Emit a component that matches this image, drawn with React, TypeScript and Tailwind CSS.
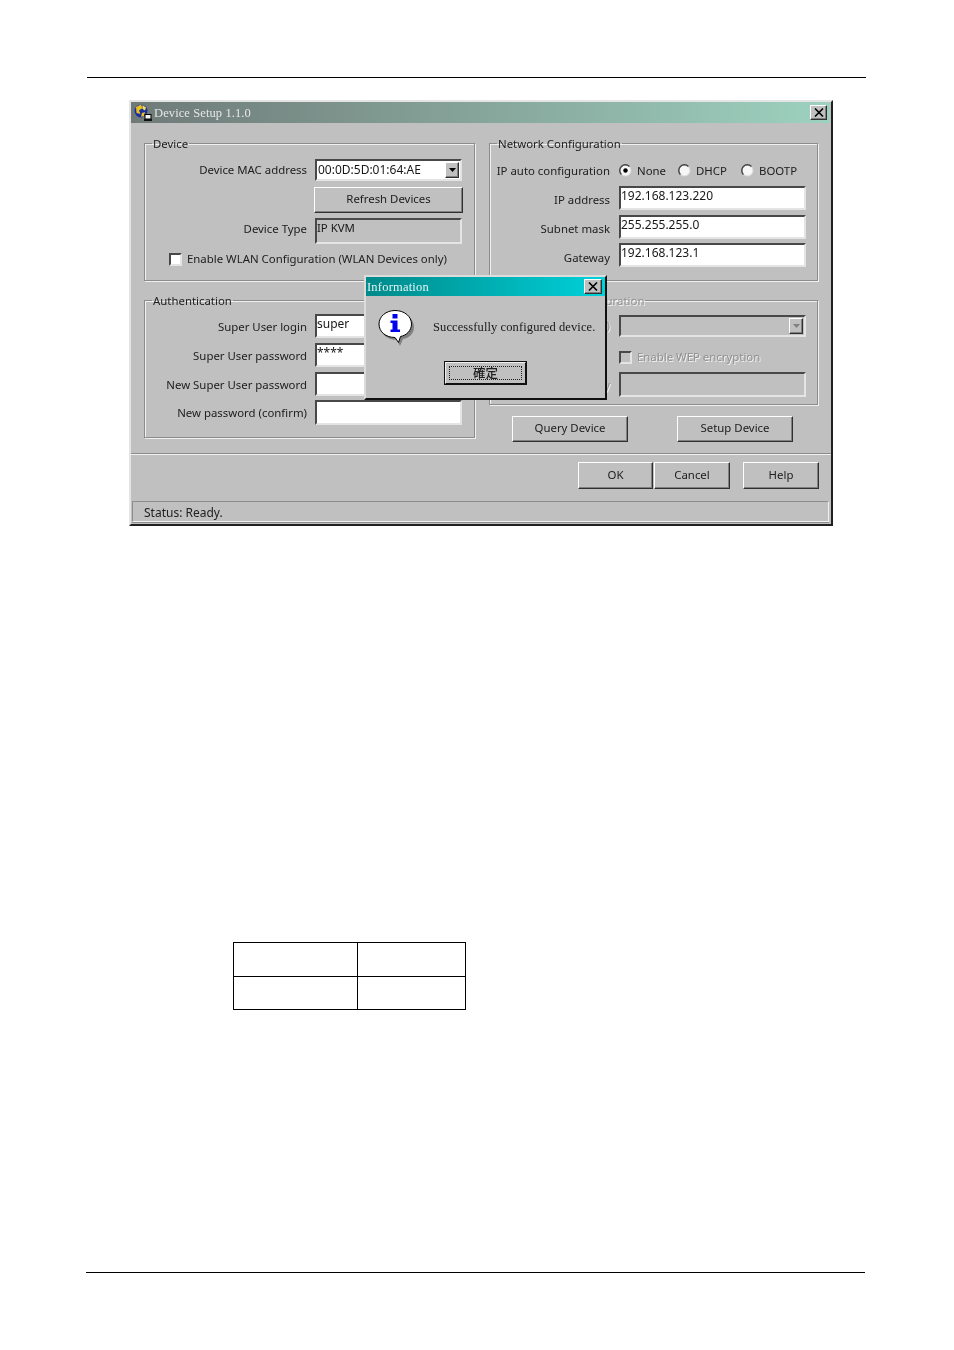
import React from "react";

const SANS = "font-['Noto_Sans','Liberation_Sans',sans-serif] text-[11.4px] leading-[14px] text-[#202020]";
const RAISED =
  "border border-t-white border-l-white border-r-[#303030] border-b-[#303030] shadow-[inset_-1px_-1px_0_#808080] bg-[#c0c0c0]";
const SUNKEN =
  "border-2 border-t-[#484848] border-l-[#484848] border-r-[#e4e4e4] border-b-[#e4e4e4]";
const GROUP =
  "border border-[#8c8c8c] shadow-[inset_1px_1px_0_#f0f0f0,1px_1px_0_#f0f0f0] min-w-0";

function Group({ title, disabled, className, children }: { title: string; disabled?: boolean; className: string; children?: React.ReactNode }) {
  return (
    <fieldset className={`${GROUP} ${className}`}>
      <legend className={`ml-[7px] px-px pt-px ${disabled ? "text-[#909090] [text-shadow:1px_1px_0_#f4f4f4]" : ""}`}>{title}</legend>
      {children}
    </fieldset>
  );
}

function Field({ value, className, wide }: { value?: string; className?: string; wide?: boolean }) {
  return (
    <div className={`${SUNKEN} ${wide ? "w-[187px]" : "w-[147px]"} bg-white pt-px text-[12px] leading-[14px] text-[#181818] ${className ?? ""}`}>
      {value}
    </div>
  );
}

function Row({ label, labelWidth, gap, children, className, disabled, labelClass }: { label: string; labelWidth: string; gap: string; children: React.ReactNode; className?: string; disabled?: boolean; labelClass?: string }) {
  return (
    <div className={`flex items-center ${gap} ${className ?? ""}`}>
      <span className={`${labelWidth} whitespace-nowrap text-right ${labelClass ?? ""} ${disabled ? "text-[#909090] [text-shadow:1px_1px_0_#f4f4f4]" : ""}`}>{label}</span>
      {children}
    </div>
  );
}

function Arrow({ color = "#000" }: { color?: string }) {
  return (
    <svg width="7" height="4" viewBox="0 0 7 4">
      <path d="M0 0H7L3.5 4Z" fill={color} />
    </svg>
  );
}

function Close({ className }: { className: string }) {
  return (
    <div className={`${RAISED} flex items-center justify-center ${className}`}>
      <svg width="10" height="9" viewBox="0 0 10 9">
        <path d="M1 0.5L9 8.5M9 0.5L1 8.5" stroke="#000" strokeWidth="1.6" />
      </svg>
    </div>
  );
}

function Radio({ checked, label, className }: { checked?: boolean; label: string; className: string }) {
  return (
    <div className={`flex items-center ${className}`}>
      <svg width="13" height="13" viewBox="0 0 13 13" className="shrink-0">
        <circle cx="6.5" cy="6.5" r="5.5" fill="#f6f6f6" stroke="#d8d8d8" />
        <path d="M2.4 10.4A5.5 5.5 0 0 1 10.4 2.4" fill="none" stroke="#404040" strokeWidth="1.4" />
        {checked && <circle cx="6.5" cy="6.5" r="2.2" fill="#000" />}
      </svg>
      <span className="ml-[5px]">{label}</span>
    </div>
  );
}

function Box({ disabled, className }: { disabled?: boolean; className?: string }) {
  return <div className={`${SUNKEN} w-[13px] h-[13px] shrink-0 ${disabled ? "bg-[#c0c0c0]" : "bg-white"} ${className ?? ""}`} />;
}

function Button({ label, className }: { label: string; className: string }) {
  return <div className={`${RAISED} flex items-center justify-center pb-[2px] ${className}`}>{label}</div>;
}

function AppIcon() {
  return (
    <svg width="18" height="17" viewBox="0 0 18 17" className="shrink-0">
      <circle cx="7" cy="7" r="6.5" fill="#1c2f9c" />
      <path d="M2 3L7 0.5L8.500 4L5 6.500L6.500 10L2.500 9Z" fill="#e8c020" />
      <path d="M8.500 1L12 3.500L11 6.500L8.500 5Z" fill="#f0e060" />
      <path d="M8 9L11 8L10 12.500L7 12.500Z" fill="#e8c020" />
      <rect x="11" y="10.500" width="6" height="4.500" fill="#f4f4f4" stroke="#000" />
      <rect x="10" y="15" width="8" height="2" fill="#101010" />
    </svg>
  );
}

function InfoIcon() {
  return (
    <svg width="38" height="38" viewBox="0 0 38 38" className="shrink-0">
      <path d="M19 4C29 4 36 10 36 18C36 25 31 29 25 30L22 37L19 31C9 31 3 25 3 18C3 10 9 4 19 4Z" fill="#808080" />
      <path d="M17 1.500C26.500 1.500 33.500 7.500 33.500 15C33.500 22 28 26.500 22.500 27.500L20.500 33.500L17 28.500C8 28.500 1 23 1 15C1 7.500 8 1.500 17 1.500Z" fill="#fff" stroke="#000" />
      <rect x="14.500" y="5" width="5" height="4.500" fill="#0000f0" />
      <path d="M12.500 11.500H19.500V20.500H22V23H12.500V20.500H14.500V14H12.500Z" fill="#0000f0" />
    </svg>
  );
}

export default function App() {
  return (
    <div className="w-[954px] h-[1350px] bg-white overflow-hidden pt-[77px]">
      <div className="ml-[87px] w-[779px] h-px bg-black" />

      <div className={`relative mt-[22px] ml-[129px] w-[704px] h-[426px] bg-[#c0c0c0] border-2 border-t-[#e4e4e4] border-l-[#e4e4e4] border-r-[#202020] border-b-[#202020] blur-[0.35px] ${SANS}`}>
        <div className="h-[21px] mr-px flex items-center pl-[3px] pr-[3px] bg-gradient-to-r from-[#6f7a78] to-[#9dd2bf]">
          <AppIcon />
          <span className="ml-[2px] font-['Liberation_Serif',serif] text-[12.5px] tracking-[0.1px] text-[#e6e6e6]">Device Setup 1.1.0</span>
          <Close className="ml-auto w-[17px] h-[15px]" />
        </div>

        <div className="h-[330px] flex pl-[13px] pt-[13px] gap-[14px]">
          <div className="w-[331px] flex flex-col gap-[12px]">
            <Group title="Device" className="h-[145px]">
              <Row label="Device MAC address" labelWidth="w-[162px]" gap="gap-[8px]" className="mt-[8px]">
                <div className={`${SUNKEN} w-[147px] h-[22px] bg-white flex items-center justify-between pl-px pr-px text-[12px] text-[#181818]`}>
                  <span className="whitespace-nowrap">00:0D:5D:01:64:AE</span>
                  <div className={`${RAISED} w-[14px] h-[16px] flex items-center justify-center`}>
                    <Arrow />
                  </div>
                </div>
              </Row>
              <Button label="Refresh Devices" className="ml-[169px] mt-[6px] w-[149px] h-[26px]" />
              <Row label="Device Type" labelWidth="w-[162px]" gap="gap-[8px]" className="mt-[5px]" labelClass="pb-[4px]">
                <Field value="IP KVM" className="h-[26px] !bg-[#c0c0c0] !text-[11.4px] pt-[2px]" />
              </Row>
              <div className="mt-[8px] ml-[24px] flex items-center">
                <Box />
                <span className="ml-[5px] whitespace-nowrap">Enable WLAN Configuration (WLAN Devices only)</span>
              </div>
            </Group>

            <Group title="Authentication" className="h-[145px]">
              <Row label="Super User login" labelWidth="w-[162px]" gap="gap-[8px]" className="mt-[6px]" labelClass="pt-[1px]">
                <Field value="super" className="h-[24px]" />
              </Row>
              <Row label="Super User password" labelWidth="w-[162px]" gap="gap-[8px]" className="mt-[5px]" labelClass="pt-[1px]">
                <Field value="****" className="h-[24px]" />
              </Row>
              <Row label="New Super User password" labelWidth="w-[162px]" gap="gap-[8px]" className="mt-[5px]" labelClass="pt-[1px]">
                <Field className="h-[24px]" />
              </Row>
              <Row label="New password (confirm)" labelWidth="w-[162px]" gap="gap-[8px]" className="mt-[4px]">
                <Field className="h-[25px]" />
              </Row>
            </Group>
          </div>

          <div className="w-[329px] flex flex-col">
            <Group title="Network Configuration" className="h-[145px]">
              <Row label="IP auto configuration" labelWidth="w-[120px]" gap="gap-[9px]" className="mt-[12px] h-[15px]">
                <div className="flex items-center">
                  <Radio checked label="None" className="w-[59px]" />
                  <Radio label="DHCP" className="w-[63px]" />
                  <Radio label="BOOTP" className="w-[60px]" />
                </div>
              </Row>
              <Row label="IP address" labelWidth="w-[120px]" gap="gap-[9px]" className="mt-[8px]" labelClass="pt-[3px]">
                <Field wide value="192.168.123.220" className="h-[24px]" />
              </Row>
              <Row label="Subnet mask" labelWidth="w-[120px]" gap="gap-[9px]" className="mt-[5px]" labelClass="pt-[3px]">
                <Field wide value="255.255.255.0" className="h-[24px]" />
              </Row>
              <Row label="Gateway" labelWidth="w-[120px]" gap="gap-[9px]" className="mt-[4px]" labelClass="pt-[5px]">
                <Field wide value="192.168.123.1" className="h-[24px]" />
              </Row>
            </Group>

            <Group title="Wireless LAN Configuration" disabled className="h-[112px] mt-[12px]">
              <Row label="ESSID (SSID)" labelWidth="w-[120px]" gap="gap-[9px]" className="mt-[7px]" disabled>
                <div className={`${SUNKEN} w-[187px] h-[22px] flex items-center justify-end pr-px`}>
                  <div className={`${RAISED} w-[14px] h-[16px] flex items-center justify-center`}>
                    <Arrow color="#808080" />
                  </div>
                </div>
              </Row>
              <div className="mt-[13px] ml-[129px] flex items-center">
                <Box disabled />
                <span className="ml-[5px] whitespace-nowrap text-[#909090] [text-shadow:1px_1px_0_#f4f4f4]">Enable WEP encryption</span>
              </div>
              <Row label="WEP key" labelWidth="w-[120px]" gap="gap-[9px]" className="mt-[8px]" disabled>
                <div className={`${SUNKEN} w-[187px] h-[25px]`} />
              </Row>
            </Group>

            <div className="mt-[11px] pl-[23px] flex gap-[49px]">
              <Button label="Query Device" className="w-[116px] h-[26px]" />
              <Button label="Setup Device" className="w-[116px] h-[26px]" />
            </div>
          </div>
        </div>

        <div className="h-[2px] border-t border-t-[#8c8c8c] border-b border-b-[#f0f0f0]" />

        <div className="pt-[7px] pr-[12px] flex justify-end">
          <Button label="OK" className="w-[75px] h-[27px]" />
          <Button label="Cancel" className="ml-px w-[76px] h-[27px]" />
          <Button label="Help" className="ml-[13px] w-[76px] h-[27px]" />
        </div>

        <div className="mt-[12px] ml-px mr-[2px] h-[21px] flex items-center pl-[11px] pt-[2px] text-[12px] border border-t-[#8c8c8c] border-l-[#8c8c8c] border-r-[#f0f0f0] border-b-[#f0f0f0] shadow-[0_1px_0_#8c8c8c]">
          Status: Ready.
        </div>

        <div className="absolute left-[233px] top-[173px] w-[243px] h-[125px] bg-[#c0c0c0] border-2 border-t-[#dcdcdc] border-l-[#dcdcdc] border-r-[#101010] border-b-[#101010]">
          <div className="h-[19px] flex items-center pl-[1px] pr-[3px] bg-gradient-to-r from-[#008a8a] to-[#00d2da]">
            <span className="font-['Liberation_Serif',serif] text-[12.5px] tracking-[0.2px] text-[#e8f4f4]">Information</span>
            <Close className="ml-auto w-[18px] h-[15px]" />
          </div>
          <div className="flex pt-[13px] pl-[12px]">
            <InfoIcon />
            <span className="mt-[11px] ml-[17px] whitespace-nowrap font-['Liberation_Serif',serif] text-[12.5px] tracking-[0.1px] text-[#181818]">
              Successfully configured device.
            </span>
          </div>
          <div className="mt-[14px] ml-[78px] w-[83px] h-[24px] p-[3px] bg-[#c0c0c0] border-2 border-t-[#f0f0f0] border-l-[#f0f0f0] border-r-[#101010] border-b-[#101010] outline outline-1 outline-[#101010] -outline-offset-1">
            <div className="h-full border border-dotted border-[#202020] flex items-center justify-center font-['Noto_Sans_CJK_TC',sans-serif] text-[12.5px] font-medium">
              確定
            </div>
          </div>
        </div>
      </div>

      <div className="mt-[416px] ml-[233px] w-[233px] h-[68px] grid grid-cols-[124px_1fr] grid-rows-[34px_1fr] border border-black">
        <div className="border-r border-b border-black" />
        <div className="border-b border-black" />
        <div className="border-r border-black" />
        <div />
      </div>

      <div className="mt-[262px] ml-[86px] w-[779px] h-px bg-black" />
    </div>
  );
}
